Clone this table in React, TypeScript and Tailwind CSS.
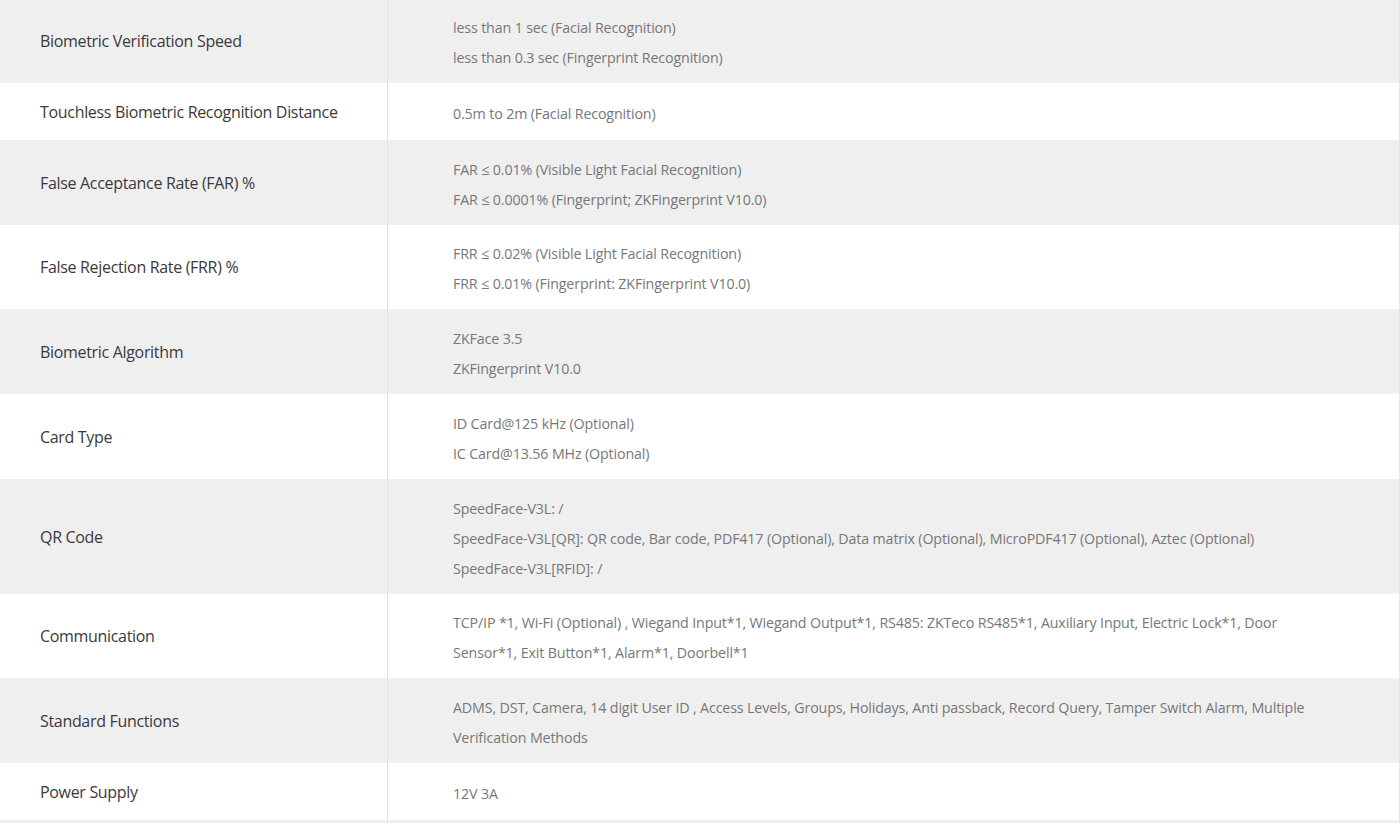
import React from "react";

const rows: { label: string; values: string[] }[] = [
  {
    label: "Biometric Verification Speed",
    values: ["less than 1 sec (Facial Recognition)", "less than 0.3 sec (Fingerprint Recognition)"],
  },
  { label: "Touchless Biometric Recognition Distance", values: ["0.5m to 2m (Facial Recognition)"] },
  {
    label: "False Acceptance Rate (FAR) %",
    values: ["FAR ≤ 0.01% (Visible Light Facial Recognition)", "FAR ≤ 0.0001% (Fingerprint; ZKFingerprint V10.0)"],
  },
  {
    label: "False Rejection Rate (FRR) %",
    values: ["FRR ≤ 0.02% (Visible Light Facial Recognition)", "FRR ≤ 0.01% (Fingerprint: ZKFingerprint V10.0)"],
  },
  { label: "Biometric Algorithm", values: ["ZKFace 3.5", "ZKFingerprint V10.0"] },
  { label: "Card Type", values: ["ID Card@125 kHz (Optional)", "IC Card@13.56 MHz (Optional)"] },
  {
    label: "QR Code",
    values: [
      "SpeedFace-V3L: /",
      "SpeedFace-V3L[QR]: QR code, Bar code, PDF417 (Optional), Data matrix (Optional), MicroPDF417 (Optional), Aztec (Optional)",
      "SpeedFace-V3L[RFID]: /",
    ],
  },
  {
    label: "Communication",
    values: [
      "TCP/IP *1, Wi-Fi (Optional) , Wiegand Input*1, Wiegand Output*1, RS485: ZKTeco RS485*1, Auxiliary Input, Electric Lock*1, Door",
      "Sensor*1, Exit Button*1, Alarm*1, Doorbell*1",
    ],
  },
  {
    label: "Standard Functions",
    values: [
      "ADMS, DST, Camera, 14 digit User ID , Access Levels, Groups, Holidays, Anti passback, Record Query, Tamper Switch Alarm, Multiple",
      "Verification Methods",
    ],
  },
  { label: "Power Supply", values: ["12V 3A"] },
  { label: "", values: [""] },
];

export default function App() {
  return (
    <div
      className="w-[1400px] h-[823px] overflow-hidden bg-white"
      style={{ fontFamily: '"Open Sans", "Noto Sans", sans-serif' }}
    >
      <div className="-mt-[2px] border-r border-[#e6e6e6]">
        {rows.map((r, i) => (
          <div
            key={i}
            className={`flex ${i % 2 === 0 ? "bg-[#efefef]" : "bg-white"}`}
          >
            <div className="w-[388px] shrink-0 border-r border-[#e3e3e3] pl-10 pr-4 pt-[17px] pb-[15px] flex items-center text-[16px] leading-[25px] text-[#3a3a3a] tracking-[-0.02em]">
              {r.label}
            </div>
            <div className="flex-1 min-w-0 pl-[65px] pr-4 pt-[14.75px] pb-[10px] flex flex-col justify-center text-[14.25px] leading-[30px] text-[#777] tracking-[-0.01em]">
              {r.values.map((v, j) => (
                <div key={j} className="whitespace-nowrap">
                  {v || "\u00a0"}
                </div>
              ))}
            </div>
          </div>
        ))}
      </div>
    </div>
  );
}
